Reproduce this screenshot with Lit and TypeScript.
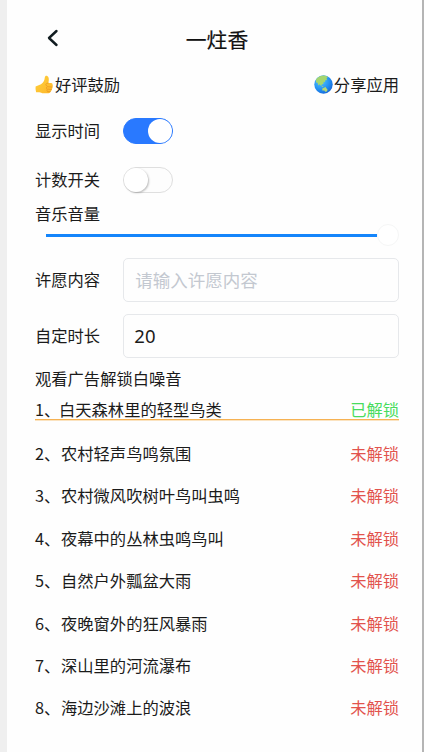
import { LitElement, html, css, svg } from "lit";
import { customElement, property } from "lit/decorators.js";

const SOUNDS: [string, boolean][] = [
  ["白天森林里的轻型鸟类", true],
  ["农村轻声鸟鸣氛围", false],
  ["农村微风吹树叶鸟叫虫鸣", false],
  ["夜幕中的丛林虫鸣鸟叫", false],
  ["自然户外瓢盆大雨", false],
  ["夜晚窗外的狂风暴雨", false],
  ["深山里的河流瀑布", false],
  ["海边沙滩上的波浪", false],
];

const thumb = svg`
  <defs><linearGradient id="skin" x1="0" y1="0" x2="1" y2="1">
    <stop offset="0" stop-color="#ffd23c"/><stop offset="1" stop-color="#fdb52a"/></linearGradient></defs>
  <path fill="url(#skin)" d="M.6 11.6 6 9.3C8.300 7.900 9.500 5.600 9.800 2.500 10 .9 11.300.5 12.300 1.100 14.100 2.200 14.200 4.900 13.300 7.900H16.100Q17.800 8 17.600 9.700 18.300 11 17.300 12.200 17.700 13.700 16.600 14.600 16.800 16 15.500 16.600 15.300 18.300 13.500 18.300H8.600C6.600 18.300 5.900 17.300 4.300 17.200H1.100Q.2 14.500.6 11.600Z"/>
  <path fill="none" stroke="#e8941c" stroke-width=".7" stroke-linecap="round" d="M13.300 8Q11.200 8 10.900 9.300 10.700 10.600 12 11M17.200 12.100 12.500 11.700Q10.900 12 11.500 13.500M16.500 14.500 12.500 14.100Q11.200 14.700 12.100 16M15.400 16.600H12.600"/>`;

const globe = svg`
  <defs><radialGradient id="sea" cx=".35" cy=".3" r=".75">
    <stop offset="0" stop-color="#56c8ff"/><stop offset=".65" stop-color="#218ff3"/><stop offset="1" stop-color="#1768d8"/></radialGradient></defs>
  <circle cx="9.500" cy="9.500" r="9.200" fill="url(#sea)"/>
  <path fill="#a5d66e" d="M2.200 4.200Q5.500.2 10.500.5L14 1.700 12.500 3.500 13.200 5.200 11.500 5 10.900 7.200 9.600 6.700 9.400 9 7.700 9.500 7.200 11.200 5.700 9.300 4.300 10.500 3.700 8.100 1.900 7.200Z"/>
  <path fill="#b5d775" d="M8.300 13.500 10.500 12.400 11.300 11.800 12.200 13 13.600 14.700 12.900 16.500 11.200 16.800 10.300 15.500 8.300 15.600ZM7.300 10.900 9.500 11.500 8.700 12.300Z"/>`;

@customElement("toggle-switch")
export class ToggleSwitch extends LitElement {
  @property({ type: Boolean, reflect: true }) on = false;
  static styles = css`
    :host { display: flex; box-sizing: border-box; width: 49.500px; height: 26px; border: 1px solid #dfdfdf;
      border-radius: 13px; background: #fdfdfd; }
    :host([on]) { background: #2979ff; border-color: #2979ff; justify-content: flex-end; }
    .knob { width: 24px; height: 24px; border-radius: 50%; background: #fff; box-shadow: 1px 1px 2px rgba(0,0,0,.25); }
    :host([on]) .knob { box-shadow: none; }
  `;
  render() { return html`<div class="knob"></div>`; }
}

@customElement("app-root")
export class AppRoot extends LitElement {
  static styles = css`
    :host { display: block; }
    * { box-sizing: border-box; }
    .page { height: 752px; overflow: hidden; padding: 0 23px 0 28px; background: #fefefe;
      border-left: 7px solid #efefef; border-right: 2px solid #b5b5b5; color: #1b1b1b;
      font: 16.300px/24px "Noto Sans CJK SC", sans-serif; white-space: nowrap; }
    .head { display: grid; grid-template-columns: 60px 1fr 60px; height: 72px; padding-top: 6px; align-items: center; }
    .back { width: 14px; height: 20px; margin-left: 11px; margin-top: -2px; }
    .title { text-align: center; font-size: 20.800px; color: #111; -webkit-text-stroke: .2px #111; }
    .links { display: flex; justify-content: space-between; height: 24px; }
    .link { display: flex; align-items: center; gap: 1px; }
    .link svg { width: 19px; height: 19px; margin-top: 1px; }
    .row { display: grid; grid-template-columns: 88.300px 1fr; align-items: center; }
    .label { margin-top: -2px; }
    .time { height: 26px; margin-top: 22px; }
    .count { height: 26px; margin-top: 23px; }
    .volume { margin-top: 8px; height: 24px; }
    .slider { display: flex; align-items: center; height: 22px; margin: -1px 0 0 11px; }
    .track { flex: 1; height: 3px; background: #1485fb; }
    .thumb { width: 22px; height: 22px; border-radius: 50%; background: #fff; border: 1px solid #f5f6f6; }
    .field { height: 44px; margin-top: 12px; }
    .box { height: 44px; border: 1px solid #e6e8eb; border-radius: 5px; padding: 0 11px;
      font: 18.500px/42px "Noto Sans", "Noto Sans CJK SC", sans-serif; }
    .value { padding-left: 10px; line-height: 41px; }
    .hint { color: #c3c8d0; font-size: 17.500px; }
    .caption { margin-top: 8px; height: 24px; }
    .item { display: flex; height: 24px; margin-bottom: 18.400px; }
    .item.done { height: 23px; margin: 7px 0 21px; border-bottom: 1px solid #f6b253; box-shadow: 0 1px #fbe3c0; }
    .num { width: 26px; }
    .done .num { width: 24px; }
    .name { flex: 1; }
    .state { color: #e2534d; }
    .done .state { color: #48dc5d; }
  `;
  render() {
    return html`<div class="page">
      <div class="head">
        <svg class="back" viewBox="0 0 14 20"><path d="M10.500 3 3 10 10.500 17" fill="none" stroke="#111c20" stroke-width="2.400" stroke-linecap="round" stroke-linejoin="round"/></svg>
        <div class="title">一炷香</div>
      </div>
      <div class="links">
        <div class="link"><svg viewBox="0 0 19 19">${thumb}</svg>好评鼓励</div>
        <div class="link"><svg viewBox="0 0 19 19">${globe}</svg>分享应用</div>
      </div>
      <div class="row time"><span class="label">显示时间</span><toggle-switch on></toggle-switch></div>
      <div class="row count"><span class="label">计数开关</span><toggle-switch></toggle-switch></div>
      <div class="volume">音乐音量</div>
      <div class="slider"><div class="track"></div><div class="thumb"></div></div>
      <div class="row field"><span class="label">许愿内容</span><div class="box hint">请输入许愿内容</div></div>
      <div class="row field"><span class="label">自定时长</span><div class="box value">20</div></div>
      <div class="caption">观看广告解锁白噪音</div>
      ${SOUNDS.map(([name, done], i) => html`<div class="item ${done ? "done" : ""}">
        <span class="num">${i + 1}、</span><span class="name">${name}</span>
        <span class="state">${done ? "已解锁" : "未解锁"}</span></div>`)}
    </div>`;
  }
}
